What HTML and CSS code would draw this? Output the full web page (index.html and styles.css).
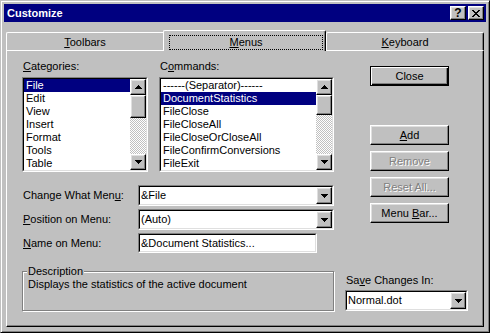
FILE: index.html
```html
<!DOCTYPE html>
<html lang="en">

<head>
    <meta charset="UTF-8">
    <title>Customize</title>
    <link rel="stylesheet" href="styles.css">
</head>

<body>
    <div class="window">
        <div class="titlebar">
            <span class="title">Customize</span>
            <div class="caption-btns">
                <span class="cap-btn help">?</span>
                <span class="cap-btn">
                    <svg width="8" height="7" viewBox="0 0 8 7" shape-rendering="crispEdges">
                        <path d="M0 0h2v1h1v1h2v-1h1v-1h2v1h-1v1h-1v1h-1v1h1v1h1v1h1v1h-2v-1h-1v-1h-2v1h-1v1h-2v-1h1v-1h1v-1h1v-1h-1v-1h-1v-1h-1z" />
                    </svg>
                </span>
            </div>
        </div>

        <div class="dialog">
            <div class="tabs">
                <div class="tab tab-first"><u>T</u>oolbars</div>
                <div class="tab tab-active"><span class="focus"><u>M</u>enus</span></div>
                <div class="tab tab-last"><u>K</u>eyboard</div>
            </div>

            <div class="panel">
                <div class="main">
                    <div class="lists">
                        <div class="cat-col">
                            <div class="label"><u>C</u>ategories:</div>
                            <div class="sunken listbox">
                                <div class="sunken-in">
                                    <div class="list-items">
                                        <div class="item sel">File</div>
                                        <div class="item">Edit</div>
                                        <div class="item">View</div>
                                        <div class="item">Insert</div>
                                        <div class="item">Format</div>
                                        <div class="item">Tools</div>
                                        <div class="item">Table</div>
                                    </div>
                                    <div class="scrollbar">
                                        <span class="raised sb-btn">
                                            <svg width="7" height="4" viewBox="0 0 7 4" shape-rendering="crispEdges"><path d="M3 0h1v1h1v1h1v1h1v1h-7v-1h1v-1h1v-1h1z" /></svg>
                                        </span>
                                        <span class="raised sb-thumb cat-thumb"></span>
                                        <span class="raised sb-btn sb-down">
                                            <svg width="7" height="4" viewBox="0 0 7 4" shape-rendering="crispEdges"><path d="M0 0h7v1h-1v1h-1v1h-1v1h-1v-1h-1v-1h-1v-1h-1z" /></svg>
                                        </span>
                                    </div>
                                </div>
                            </div>
                        </div>
                        <div class="cmd-col">
                            <div class="label">C<u>o</u>mmands:</div>
                            <div class="sunken listbox">
                                <div class="sunken-in">
                                    <div class="list-items">
                                        <div class="item">------(Separator)------</div>
                                        <div class="item sel">DocumentStatistics</div>
                                        <div class="item">FileClose</div>
                                        <div class="item">FileCloseAll</div>
                                        <div class="item">FileCloseOrCloseAll</div>
                                        <div class="item">FileConfirmConversions</div>
                                        <div class="item">FileExit</div>
                                    </div>
                                    <div class="scrollbar">
                                        <span class="raised sb-btn">
                                            <svg width="7" height="4" viewBox="0 0 7 4" shape-rendering="crispEdges"><path d="M3 0h1v1h1v1h1v1h1v1h-7v-1h1v-1h1v-1h1z" /></svg>
                                        </span>
                                        <span class="raised sb-thumb cmd-thumb"></span>
                                        <span class="raised sb-btn sb-down">
                                            <svg width="7" height="4" viewBox="0 0 7 4" shape-rendering="crispEdges"><path d="M0 0h7v1h-1v1h-1v1h-1v1h-1v-1h-1v-1h-1v-1h-1z" /></svg>
                                        </span>
                                    </div>
                                </div>
                            </div>
                        </div>
                    </div>

                    <div class="fields">
                        <div class="field-row">
                            <span class="field-label">Change What Men<u>u</u>:</span>
                            <div class="sunken combo">
                                <div class="sunken-in">
                                    <span class="combo-text">&amp;File</span>
                                    <span class="raised drop-btn">
                                        <svg width="7" height="4" viewBox="0 0 7 4" shape-rendering="crispEdges"><path d="M0 0h7v1h-1v1h-1v1h-1v1h-1v-1h-1v-1h-1v-1h-1z" /></svg>
                                    </span>
                                </div>
                            </div>
                        </div>
                        <div class="field-row">
                            <span class="field-label"><u>P</u>osition on Menu:</span>
                            <div class="sunken combo">
                                <div class="sunken-in">
                                    <span class="combo-text">(Auto)</span>
                                    <span class="raised drop-btn">
                                        <svg width="7" height="4" viewBox="0 0 7 4" shape-rendering="crispEdges"><path d="M0 0h7v1h-1v1h-1v1h-1v1h-1v-1h-1v-1h-1v-1h-1z" /></svg>
                                    </span>
                                </div>
                            </div>
                        </div>
                        <div class="field-row">
                            <span class="field-label"><u>N</u>ame on Menu:</span>
                            <div class="sunken edit">
                                <div class="sunken-in">
                                    <span class="combo-text">&amp;Document Statistics...</span>
                                </div>
                            </div>
                        </div>
                    </div>
                </div>

                <div class="buttons">
                    <span class="btn btn-default"><span>Close</span></span>
                    <span class="btn btn-add"><span><u>A</u>dd</span></span>
                    <span class="btn disabled"><span>Remove</span></span>
                    <span class="btn disabled"><span>Reset All...</span></span>
                    <span class="btn"><span>Menu <u>B</u>ar...</span></span>
                </div>

                <div class="group">
                    <span class="group-title">Description</span>
                    <p class="group-text">Displays the statistics of the active document</p>
                </div>

                <div class="save">
                    <div class="label">Sa<u>v</u>e Changes In:</div>
                    <div class="sunken combo save-combo">
                        <div class="sunken-in">
                            <span class="combo-text">Normal.dot</span>
                            <span class="raised drop-btn">
                                <svg width="7" height="4" viewBox="0 0 7 4" shape-rendering="crispEdges"><path d="M0 0h7v1h-1v1h-1v1h-1v1h-1v-1h-1v-1h-1v-1h-1z" /></svg>
                            </span>
                        </div>
                    </div>
                </div>
            </div>
        </div>
    </div>
</body>

</html>
```

FILE: styles.css
```css
* {
    box-sizing: border-box;
    margin: 0;
    padding: 0;
}

body {
    font-family: "Liberation Sans", Arial, sans-serif;
    font-size: 11px;
    line-height: 13px;
    color: #000;
    background-color: #c0c0c0;
}

.window {
    width: 490px;
    height: 333px;
    display: flex;
    flex-direction: column;
    background: #c0c0c0;
    border: 1px solid;
    border-color: #c0c0c0 #000 #000 #c0c0c0;
    box-shadow: inset 1px 1px #fff, inset -1px -1px #808080;
    padding: 3px;
}

.titlebar {
    height: 18px;
    background: #000080;
    display: flex;
    align-items: center;
    justify-content: space-between;
    padding: 0 2px 0 3px;
}

.title {
    color: white;
    font-weight: bold;
}

.caption-btns {
    display: flex;
    gap: 2px;
}

/* raised 3d edge used by buttons and scroll parts */
.raised,
.cap-btn,
.btn {
    background: #c0c0c0;
    border: 1px solid;
    border-color: #fff #000 #000 #fff;
    box-shadow: inset -1px -1px #808080, inset 1px 1px #dfdfdf;
}

.cap-btn {
    width: 16px;
    height: 14px;
    display: flex;
    align-items: center;
    justify-content: center;
}

.help {
    font-weight: bold;
    font-size: 12px;
    line-height: 12px;
}

.dialog {
    flex: 1;
    display: flex;
    flex-direction: column;
    padding: 8px 2px 2px;
}

.tabs {
    display: flex;
    align-items: flex-end;
    margin-bottom: -1px;
    position: relative;
    z-index: 1;
}

.tab {
    height: 18px;
    margin-bottom: 1px;
    padding-top: 3px;
    text-align: center;
    background: #c0c0c0;
    border-top: 1px solid #fff;
    border-left: 1px solid #fff;
    border-top-left-radius: 2px;
}

.tab-first {
    width: 157px;
}

.tab-last {
    width: 158px;
    border-right: 1px solid #000;
    border-top-right-radius: 2px;
    box-shadow: inset -1px 0 #808080;
}

.tab-active {
    width: 163px;
    height: 21px;
    margin-bottom: 0;
    padding-top: 4px;
    border-right: 1px solid #000;
    border-top-right-radius: 2px;
    box-shadow: inset -1px 0 #808080;
}

.focus {
    display: block;
    border: 1px dotted #000;
    margin: 0 2px 0 5px;
}

.panel {
    flex: 1;
    border: 1px solid;
    border-color: #fff #000 #000 #fff;
    box-shadow: inset -1px -1px #808080;
    padding: 9px 0 0 15px;
    display: grid;
    grid-template-columns: 312px 123px;
    column-gap: 11px;
    row-gap: 12px;
    align-content: start;
}

.lists {
    display: flex;
    gap: 11px;
}

.cat-col {
    width: 126px;
}

.cmd-col {
    width: 175px;
}

.label {
    padding-left: 1px;
    margin-bottom: 4px;
    white-space: nowrap;
}

.sunken {
    border: 1px solid;
    border-color: #808080 #fff #fff #808080;
}

.sunken-in {
    height: 100%;
    display: flex;
    align-items: center;
    background: white;
    border: 1px solid;
    border-color: #000 #dfdfdf #dfdfdf #000;
}

.listbox {
    height: 95px;
}

.listbox .sunken-in {
    align-items: stretch;
}

.list-items {
    flex: 1;
    overflow: hidden;
}

.item {
    height: 13px;
    padding-left: 2px;
    white-space: nowrap;
}

.item.sel {
    background: #000080;
    color: white;
}

.scrollbar {
    width: 16px;
    display: flex;
    flex-direction: column;
    background: repeating-conic-gradient(#c0c0c0 0 25%, #fff 0 50%) 0 0 / 2px 2px;
}

.sb-btn {
    height: 16px;
    display: flex;
    align-items: center;
    justify-content: center;
}

.sb-down {
    margin-top: auto;
}

.cat-thumb {
    height: 23px;
}

.cmd-thumb {
    height: 20px;
}

.fields {
    margin-top: 13px;
    display: flex;
    flex-direction: column;
    gap: 3px;
}

.field-row {
    display: flex;
    align-items: center;
}

.field-label {
    width: 116px;
    padding-left: 1px;
    white-space: nowrap;
}

.combo {
    width: 196px;
    height: 21px;
}

.edit {
    width: 179px;
    height: 20px;
}

.combo-text {
    flex: 1;
    padding-left: 1px;
    white-space: nowrap;
}

.drop-btn {
    width: 16px;
    height: 17px;
    display: flex;
    align-items: center;
    justify-content: center;
}

.buttons {
    display: flex;
    flex-direction: column;
    padding-left: 25px;
}

.btn {
    width: 79px;
    height: 20px;
    margin-top: 6px;
    display: flex;
    align-items: center;
    justify-content: center;
    white-space: nowrap;
}

.btn-default {
    border-color: #000;
    box-shadow: inset 1px 1px #fff, inset -1px -1px #000, inset -2px -2px #808080;
}

.btn-add {
    margin-top: 39px;
}

.btn.disabled {
    color: #808080;
    text-shadow: 1px 1px 0 #fff;
}

.group {
    margin-top: 6px;
    height: 40px;
    border: 1px solid #808080;
    box-shadow: inset 1px 1px #fff, 1px 1px #fff;
    padding: 0 4px;
}

.group-title {
    display: table;
    margin-top: -7px;
    padding: 0 1px;
    background: #c0c0c0;
}

.group-text {
    padding-left: 1px;
}

.save {
    padding-top: 9px;
}

.save .label {
    margin-bottom: 3px;
}

.save-combo {
    width: 123px;
}
```
